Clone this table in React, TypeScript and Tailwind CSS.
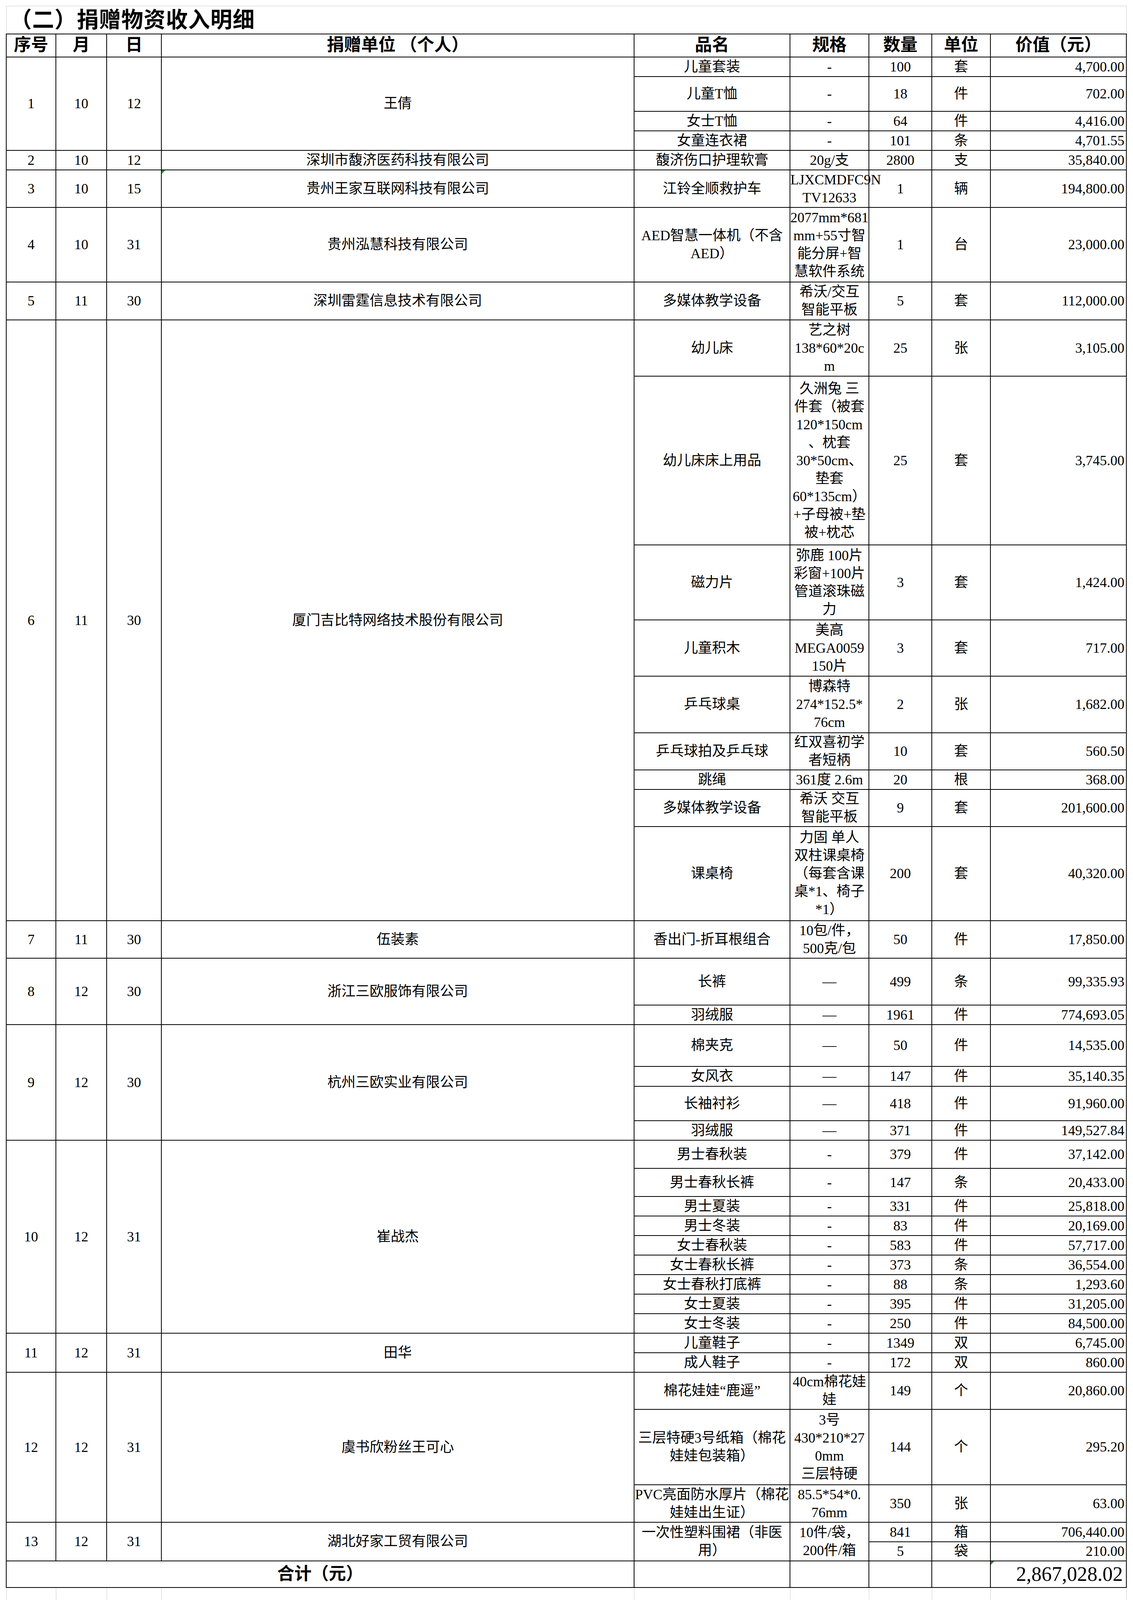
import React from 'react';

type Item = {
    name: string;
    spec: string;
    qty: string;
    unit: string;
    value: string;
    h: number;
    span?: number;
    cont?: boolean;
    mark?: boolean;
};

type Group = {
    no: string;
    m: string;
    d: string;
    donor: string;
    items: Item[];
    mark?: boolean;
};

const it = (name: string, spec: string, qty: string, unit: string, value: string, h = 50, extra: Partial<Item> = {}): Item => ({
    name, spec, qty, unit, value, h, ...extra,
});

const goods: Group[] = [
    {
        no: '1', m: '10', d: '12', donor: '王倩', items: [
            it('儿童套装', '-', '100', '套', '4,700.00'),
            it('儿童T恤', '-', '18', '件', '702.00', 89),
            it('女士T恤', '-', '64', '件', '4,416.00'),
            it('女童连衣裙', '-', '101', '条', '4,701.55'),
        ],
    },
    { no: '2', m: '10', d: '12', donor: '深圳市馥济医药科技有限公司', items: [it('馥济伤口护理软膏', '20g/支', '2800', '支', '35,840.00')] },
    { no: '3', m: '10', d: '15', donor: '贵州王家互联网科技有限公司', mark: true, items: [it('江铃全顺救护车', 'LJXCMDFC9N\nTV12633', '1', '辆', '194,800.00', 96)] },
    { no: '4', m: '10', d: '31', donor: '贵州泓慧科技有限公司', items: [it('AED智慧一体机（不含\nAED）', '2077mm*681\nmm+55寸智\n能分屏+智\n慧软件系统', '1', '台', '23,000.00', 191)] },
    { no: '5', m: '11', d: '30', donor: '深圳雷霆信息技术有限公司', items: [it('多媒体教学设备', '希沃/交互\n智能平板', '5', '套', '112,000.00', 97)] },
    {
        no: '6', m: '11', d: '30', donor: '厦门吉比特网络技术股份有限公司', items: [
            it('幼儿床', '艺之树\n138*60*20c\nm', '25', '张', '3,105.00', 144),
            it('幼儿床床上用品', '久洲兔 三\n件套（被套\n120*150cm\n、枕套\n30*50cm、\n垫套\n60*135cm）\n+子母被+垫\n被+枕芯', '25', '套', '3,745.00', 432),
            it('磁力片', '弥鹿 100片\n彩窗+100片\n管道滚珠磁\n力', '3', '套', '1,424.00', 192),
            it('儿童积木', '美高\nMEGA0059\n150片', '3', '套', '717.00', 144),
            it('乒乓球桌', '博森特\n274*152.5*\n76cm', '2', '张', '1,682.00', 145),
            it('乒乓球拍及乒乓球', '红双喜初学\n者短柄', '10', '套', '560.50', 95),
            it('跳绳', '361度 2.6m', '20', '根', '368.00'),
            it('多媒体教学设备', '希沃 交互\n智能平板', '9', '套', '201,600.00', 95),
            it('课桌椅', '力固 单人\n双柱课桌椅\n（每套含课\n桌*1、椅子\n*1）', '200', '套', '40,320.00', 241),
        ],
    },
    { no: '7', m: '11', d: '30', donor: '伍装素', items: [it('香出门-折耳根组合', '10包/件，\n500克/包', '50', '件', '17,850.00', 96)] },
    {
        no: '8', m: '12', d: '30', donor: '浙江三欧服饰有限公司', items: [
            it('长裤', '—', '499', '条', '99,335.93', 120),
            it('羽绒服', '—', '1961', '件', '774,693.05'),
        ],
    },
    {
        no: '9', m: '12', d: '30', donor: '杭州三欧实业有限公司', items: [
            it('棉夹克', '—', '50', '件', '14,535.00', 107),
            it('女风衣', '—', '147', '件', '35,140.35', 51),
            it('长袖衬衫', '—', '418', '件', '91,960.00', 88),
            it('羽绒服', '—', '371', '件', '149,527.84'),
        ],
    },
    {
        no: '10', m: '12', d: '31', donor: '崔战杰', items: [
            it('男士春秋装', '-', '379', '件', '37,142.00', 72),
            it('男士春秋长裤', '-', '147', '条', '20,433.00', 72),
            it('男士夏装', '-', '331', '件', '25,818.00'),
            it('男士冬装', '-', '83', '件', '20,169.00'),
            it('女士春秋装', '-', '583', '件', '57,717.00'),
            it('女士春秋长裤', '-', '373', '条', '36,554.00'),
            it('女士春秋打底裤', '-', '88', '条', '1,293.60'),
            it('女士夏装', '-', '395', '件', '31,205.00'),
            it('女士冬装', '-', '250', '件', '84,500.00'),
        ],
    },
    {
        no: '11', m: '12', d: '31', donor: '田华', items: [
            it('儿童鞋子', '-', '1349', '双', '6,745.00'),
            it('成人鞋子', '-', '172', '双', '860.00'),
        ],
    },
    {
        no: '12', m: '12', d: '31', donor: '虞书欣粉丝王可心', items: [
            it('棉花娃娃“鹿遥”', '40cm棉花娃\n娃', '149', '个', '20,860.00', 95),
            it('三层特硬3号纸箱（棉花\n娃娃包装箱）', '3号\n430*210*27\n0mm\n三层特硬', '144', '个', '295.20', 193),
            it('PVC亮面防水厚片（棉花\n娃娃出生证）', '85.5*54*0.\n76mm', '350', '张', '63.00', 96),
        ],
    },
    {
        no: '13', m: '12', d: '31', donor: '湖北好家工贸有限公司', items: [
            it('一次性塑料围裙（非医\n用）', '10件/袋，\n200件/箱', '841', '箱', '706,440.00', 50, { span: 2 }),
            it('', '', '5', '袋', '210.00', 49, { cont: true }),
        ],
    },
];

const epidemic: Group[] = [
    {
        no: '1', m: '11', d: '1', donor: '贵州品尚科技有限公司', items: [
            it('全自动化学发光免疫分\n析仪', 'eCL9000', '1', '台', '242,000.00', 96),
            it('电脑', '联想 M737t\n主机 TE22\n显示屏', '1', '台', '5,000.00', 144),
            it('全自动化学发光测定仪', 'Auto\nLumo2000Pl\nus', '1', '台', '75,000.00', 144),
            it('阴道分泌物检测仪', 'RT-F600', '1', '台', '30,000.00'),
            it('电脑', 'RT-I3', '1', '台', '7,600.00'),
        ],
    },
    {
        no: '2', m: '11', d: '1', donor: '贵州星宝锐科技有限公司', items: [
            it('全自动血液免疫分析仪', 'DM79X', '1', '台', '34,300.00'),
            it('电脑', 'M2600d', '1', '台', '3,700.00'),
            it('阴道分泌物检测仪', 'RT-F600', '1', '台', '30,000.00'),
            it('电脑', 'RT-I3', '1', '台', '7,600.00'),
        ],
    },
    { no: '3', m: '11', d: '1', donor: '贵州中鑫医药有限公司', items: [it('中频胃肠治疗仪', 'DJ-R5型', '2', '台', '4,800.00', 51)] },
    {
        no: '4', m: '11', d: '8', donor: '贵州星月天诚贸易有限公司', items: [
            it('医用防护服', '60套/箱', '4', '箱', '36,000.00', 99),
            it('医用外科口罩', '2000个/箱', '10', '箱', '20,000.00', 51),
            it('新型冠状病毒抗原检测\n试剂盒', '-', '1120', '人份', '55,440.00', 96),
        ],
    },
    {
        no: '5', m: '11', d: '8', donor: '国药控股贵州有限公司', items: [
            it('75%酒精', '500ml/瓶', '300', '瓶', '1,350.00'),
            it('84消毒液', '500g/瓶', '600', '瓶', '1,500.00'),
            it('医用外科口罩', '-', '6000', '个', '1,800.00', 49),
        ],
    },
    { no: '6', m: '11', d: '8', donor: '程佩佩', items: [it('医用防护服', 'XXL\n（175cm）', '100', '件', '1,300.00', 96)] },
    {
        no: '7', m: '11', d: '8', donor: '新石器科技有限公司', items: [
            it('DOC-NFW 防护口罩', '50个/盒', '381500', '个', '152,600.00', 51),
            it('NEO-2DH 防护口罩', '40/个盒', '88920', '个', '53,352.00'),
            it('NEO-3DH 防护口罩', '50个/盒', '60000', '个', '36,000.00'),
        ],
    },
    { no: '8', m: '11', d: '15', donor: '贵州万智聚文化传播有限公司', items: [it('大米', '-', '3000', '斤', '13,550.00', 49)] },
    { no: '9', m: '11', d: '30', donor: '山东新时代药业有限公司', items: [it('启达力®荆防颗粒', '15g*10袋/\n盒，72盒/\n箱', '20', '箱', '80,640.00', 145)] },
    {
        no: '10', m: '11', d: '30', donor: '虎灰平', items: [
            it('防护服AS', '185', '120', '套', '4,200.00', 49),
            it('防护服KL', '185', '360', '套', '7,020.00', 51),
            it('鞋套KM', '-', '500', '双', '1,750.00'),
            it('隔离面罩', '-', '500', '个', '800.00', 49),
            it('医用外科口罩', '-', '20000', '只', '2,247.00', 51),
        ],
    },
    { no: '11', m: '11', d: '30', donor: '西安利君制药合肥医药有限公司', items: [it('贵视月饼', '-', '500', '盒', '17,000.00')] },
    { no: '12', m: '11', d: '30', donor: '信通达智能科技有限公司', items: [it('行军床', '-', '100', '张', '22,000.00')] },
    { no: '13', m: '11', d: '30', donor: '新乡市华兰慈善基金会', items: [it('四价流感病毒裂解疫苗\n（注射器1支*360）', '华兰生物\n15 μ\ng/0.5ml/支', '1500', '支', '214,500.00', 143)] },
    {
        no: '14', m: '11', d: '30', donor: '广东省人民政府', items: [
            it('医用一次性防护服', 'KF-PC\nBS01（EO）\n175(带脚\n套)', '19980', '件', '899,100.00', 193, { mark: true }),
            it('医用一次性防护服', 'KF-PC BS01\n（EO）\n180(带脚\n套)', '10020', '件', '450,900.00', 192),
            it('医用防护口罩', 'KF-A F19\n(W-SJ-EO)', '50000', '个', '225,000.00', 95),
            it('医用隔离眼罩', 'KFS-GC-\n101-AF、\n185*90 mm', '50000', '个', '750,000.00', 144),
            it('医用隔离面罩', 'KFS-A1', '50000', '个', '300,000.00', 51),
        ],
    },
    { no: '15', m: '11', d: '30', donor: '安顺市宝林科技中药饮片有限公司', items: [it('中药液', '190ml/袋', '1000', '袋', '12,000.00')] },
];

const widths = ['w-[127px]', 'w-[130px]', 'w-[140px]', 'w-[1210px]', 'w-[399px]', 'w-[202px]', 'w-[161px]', 'w-[150px]', 'w-[348px]'];
const heads = ['序号', '月', '日', '捐赠单位 （个人）', '品名', '规格', '数量', '单位', '价值（元）'];

// leading kept under the row pitch so rows never grow past their set height
const cell = 'border-2 border-black text-center align-middle whitespace-pre leading-[46px]';
const gray = 'border-[#c6ccd6]';

function Mark() {
    return <span className="absolute left-0 top-0 h-0 w-0 border-t-[9px] border-r-[9px] border-t-[#22912f] border-r-transparent" />;
}

function DonationTable({ title, groups, total, wide, spacer }: { title: string; groups: Group[]; total: string; wide?: boolean; spacer?: boolean }) {
    const priceCls = wide ? 'text-right pr-6' : 'text-right pr-1';
    const monthCls = wide ? 'border-r' : '';
    const dayCls = wide ? 'border-l' : '';

    return (
        <table className="w-[2867px] table-fixed border-collapse text-[36px] text-black">
            <colgroup>
                {widths.map((w, i) => <col key={i} className={w} />)}
            </colgroup>
            <tbody>
                <tr className={wide ? 'h-[70px]' : 'h-[71px]'}>
                    <td colSpan={9} className={`border ${gray} ${wide ? 'border-t-0' : ''} pl-[9px] text-left align-middle text-[56px] font-bold leading-none tracking-[1px]`}>
                        {title}
                    </td>
                </tr>
                <tr className={wide ? 'h-[60px]' : 'h-[59px]'}>
                    {heads.map((h, i) => (
                        <td key={h} className={`${cell} text-[44px] font-bold leading-none ${i === 1 ? monthCls : ''} ${i === 2 ? dayCls : ''}`}>{h}</td>
                    ))}
                </tr>
                {groups.map((g) =>
                    g.items.map((item, i) => (
                        <tr key={`${g.no}-${i}`} style={{ height: item.h }}>
                            {i === 0 && (
                                <>
                                    <td rowSpan={g.items.length} className={cell}>{g.no}</td>
                                    <td rowSpan={g.items.length} className={`${cell} ${monthCls}`}>{g.m}</td>
                                    <td rowSpan={g.items.length} className={`${cell} ${dayCls}`}>{g.d}</td>
                                    <td rowSpan={g.items.length} className={`${cell} relative`}>
                                        {g.mark && <Mark />}
                                        {g.donor}
                                    </td>
                                </>
                            )}
                            {!item.cont && (
                                <>
                                    <td rowSpan={item.span} className={cell}>{item.name}</td>
                                    <td rowSpan={item.span} className={`${cell} relative`}>
                                        {item.mark && <Mark />}
                                        {item.spec}
                                    </td>
                                </>
                            )}
                            <td className={cell}>{item.qty}</td>
                            <td className={cell}>{item.unit}</td>
                            <td className={`${cell} ${priceCls}`}>{item.value}</td>
                        </tr>
                    ))
                )}
                <tr className={wide ? 'h-[59px]' : 'h-[68px]'}>
                    <td colSpan={4} className={`${cell} text-[44px] font-bold leading-none ${wide ? 'align-bottom pb-1' : ''}`}>合计（元）</td>
                    <td className={cell} />
                    <td className={cell} />
                    <td className={cell} />
                    <td className={cell} />
                    <td className={`${cell} relative text-right pr-2 text-[52px] leading-none ${wide ? 'align-bottom pb-1' : ''}`}>
                        <Mark />
                        {total}
                    </td>
                </tr>
                {spacer && (
                    <tr className="h-[71px]">
                        {widths.map((_, i) => <td key={i} className={`border ${gray}`} />)}
                    </tr>
                )}
            </tbody>
        </table>
    );
}

export default function App() {
    return (
        <div className="w-[2900px] bg-white pb-[17px] pl-[15px] pt-[15px] [font-family:'Liberation_Serif','Noto_Sans_CJK_SC',serif]">
            <DonationTable title="（二）捐赠物资收入明细" groups={goods} total="2,867,028.02" spacer />
            <DonationTable title="（三）捐赠物资（疫情物资）收入明细" groups={epidemic} total="3,800,049.00" wide />
        </div>
    );
}
